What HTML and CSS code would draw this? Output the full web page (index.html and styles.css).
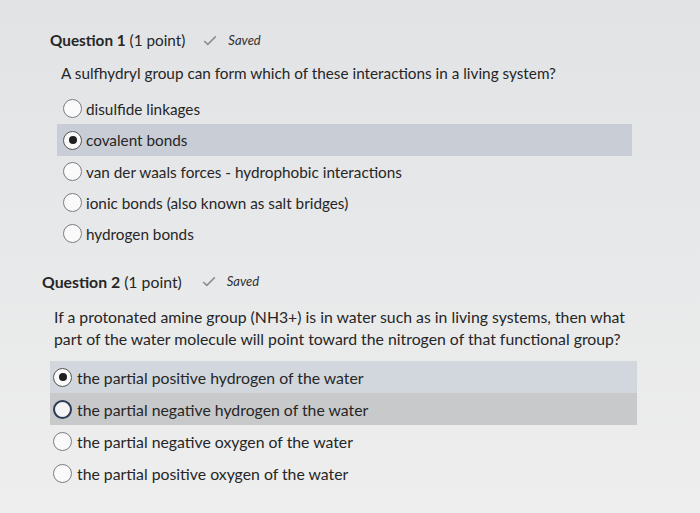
FILE: index.html
```html
<!DOCTYPE html>
<html>
<head>
<meta charset="utf-8">
<link rel="stylesheet" href="styles.css">
</head>
<body>
<div class="page">
  <section class="question q1">
    <div class="qhead">
      <span class="qtitle"><b>Question 1</b> (1 point)</span>
      <span class="saved"><svg class="check" viewBox="0 0 14 11" width="14" height="11"><path d="M1.2 6 L4.8 9.4 L12.8 1.4" fill="none" stroke="#8a8d92" stroke-width="1.5"/></svg><i>Saved</i></span>
    </div>
    <p class="qtext">A sulfhydryl group can form which of these interactions in a living system?</p>
    <div class="options">
      <div class="opt"><span class="radio"></span><span>disulfide linkages</span></div>
      <div class="opt sel"><span class="radio on"></span><span>covalent bonds</span></div>
      <div class="opt"><span class="radio"></span><span>van der waals forces - hydrophobic interactions</span></div>
      <div class="opt"><span class="radio"></span><span>ionic bonds (also known as salt bridges)</span></div>
      <div class="opt"><span class="radio"></span><span>hydrogen bonds</span></div>
    </div>
  </section>
  <section class="question q2">
    <div class="qhead">
      <span class="qtitle"><b>Question 2</b> (1 point)</span>
      <span class="saved"><svg class="check" viewBox="0 0 14 11" width="14" height="11"><path d="M1.2 6 L4.8 9.4 L12.8 1.4" fill="none" stroke="#8a8d92" stroke-width="1.5"/></svg><i>Saved</i></span>
    </div>
    <p class="qtext">If a protonated amine group (NH3+) is in water such as in living systems, then what part of the water molecule will point toward the nitrogen of that functional group?</p>
    <div class="options">
      <div class="opt sel"><span class="radio on"></span><span>the partial positive hydrogen of the water</span></div>
      <div class="opt hover"><span class="radio focus"></span><span>the partial negative hydrogen of the water</span></div>
      <div class="opt"><span class="radio"></span><span>the partial negative oxygen of the water</span></div>
      <div class="opt"><span class="radio"></span><span>the partial positive oxygen of the water</span></div>
    </div>
  </section>
</div>
</body>
</html>
```
FILE: styles.css
```css
html, body {
  margin: 0;
  padding: 0;
}
body {
  width: 700px;
  height: 513px;
  overflow: hidden;
  background: linear-gradient(180deg, #e2e3e5 0%, #e7e8e9 45%, #eeeeee 100%);
  font-family: Lato, "Noto Sans", sans-serif;
  color: #262626;
}
.page {
  padding-top: 30px;
}
.qhead {
  display: flex;
  align-items: center;
  height: 20px;
}
.qtitle b {
  font-weight: 700;
}
.saved {
  display: flex;
  align-items: center;
  font-size: 13px;
  color: #303030;
}
.check {
  margin-right: 11px;
}
.qtext {
  margin: 0;
  line-height: 22px;
}
.options {
  display: flex;
  flex-direction: column;
}
.opt {
  display: flex;
  align-items: center;
  height: 31px;
}
.radio {
  width: 19px;
  height: 19px;
  border-radius: 50%;
  border: 1px solid #7a7c80;
  background: #fafafa;
  box-sizing: border-box;
  display: flex;
  align-items: center;
  justify-content: center;
  flex: none;
}
.radio.on {
  border: 1.5px solid #555;
}
.radio.on::after {
  content: "";
  width: 8px;
  height: 8px;
  border-radius: 50%;
  background: #1f1f22;
}
.radio.focus {
  border: 2px solid #2c3a55;
  background: #f4f4f4;
}

/* Question 1 */
.q1 {
  font-size: 15.3px;
}
.q1 .qhead {
  margin-left: 50px;
}
.q1 .saved {
  margin-left: 18px;
}
.q1 .qtext {
  margin: 12px 0 0 61px;
}
.q1 .options {
  margin: 9px 0 0 57px;
  width: 575px;
}
.q1 .opt {
  padding-left: 6px;
  gap: 4px;
}
.q1 .opt.sel {
  height: 32px;
  background: #c9ced6;
}

/* Question 2 */
.q2 {
  margin-top: 22px;
  font-size: 15.8px;
}
.q2 .qhead {
  margin-left: 42px;
}
.q2 .saved {
  margin-left: 20px;
}
.q2 .qtext {
  margin: 15px 0 0 54px;
  width: 575px;
}
.q2 .options {
  margin: 11px 0 0 50px;
  width: 587px;
}
.q2 .opt {
  height: 32px;
  padding-left: 3px;
  gap: 5px;
}
.q2 .opt.sel {
  background: #d2d7dd;
}
.q2 .opt.hover {
  background: #c8c9cb;
}
```
